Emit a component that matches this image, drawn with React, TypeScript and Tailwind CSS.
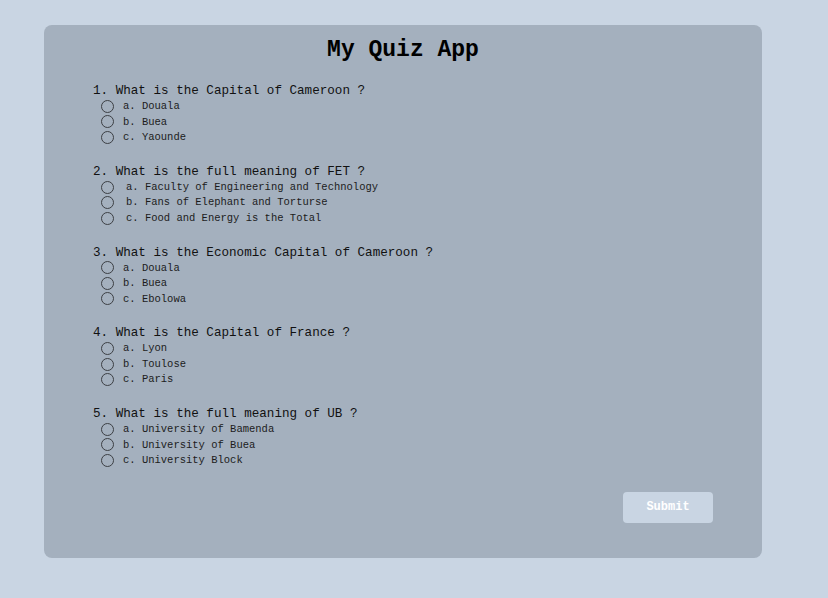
import { useState } from "react";

type Question = {
  q: string;
  options: string[];
};

const QUESTIONS: Question[] = [
  { q: "1. What is the Capital of Cameroon ?", options: ["a. Douala", "b. Buea", "c. Yaounde"] },
  {
    q: "2. What is the full meaning of FET ?",
    options: ["a. Faculty of Engineering and Technology", "b. Fans of Elephant and Torturse", "c. Food and Energy is the Total"],
  },
  { q: "3. What is the Economic Capital of Cameroon ?", options: ["a. Douala", "b. Buea", "c. Ebolowa"] },
  { q: "4. What is the Capital of France ?", options: ["a. Lyon", "b. Toulose", "c. Paris"] },
  {
    q: "5. What is the full meaning of UB ?",
    options: ["a. University of Bamenda", "b. University of Buea", "c. University Block"],
  },
];

export default function App() {
  const [answers, setAnswers] = useState<Record<number, number>>({});

  return (
    <div
      className="min-h-[598px] w-full bg-[#c9d5e3] pl-[44px] pt-[25px]"
      style={{ fontFamily: '"Liberation Mono", "Courier New", monospace' }}
    >
      <div className="w-[718px] h-[533px] rounded-[8px] bg-[#a4b0be] flex flex-col px-[49px] pt-[12px]">
        <h1 className="text-center text-[23px] leading-[26px] font-bold text-black">My Quiz App</h1>

        <div className="mt-[20px] flex flex-col gap-[18.25px]">
          {QUESTIONS.map((item, qi) => (
            <div key={qi} className="flex flex-col">
              <p className="text-[12.6px] leading-[16px] text-[#111]">{item.q}</p>
              {item.options.map((opt, oi) => (
                <label key={oi} className="flex items-center h-[15.5px] pl-[8px] cursor-pointer">
                  <input
                    type="radio"
                    name={`q${qi}`}
                    checked={answers[qi] === oi}
                    onChange={() => setAnswers((prev) => ({ ...prev, [qi]: oi }))}
                    className="appearance-none w-[13px] h-[13px] rounded-full border border-[#3c3f44] bg-transparent checked:bg-[#3c3f44] m-0 -mt-[1px]"
                  />
                  <span className={`text-[10.5px] leading-[15.5px] text-[#1c1c1c] ${qi === 1 ? "ml-[12px]" : "ml-[9px]"}`}>
                    {opt}
                  </span>
                </label>
              ))}
            </div>
          ))}
        </div>

        <div className="flex justify-end mt-[23px]">
          <button className="w-[90px] h-[31px] rounded-[4px] bg-[#c9d5e3] text-white text-[12px] font-bold">
            Submit
          </button>
        </div>
      </div>
    </div>
  );
}
